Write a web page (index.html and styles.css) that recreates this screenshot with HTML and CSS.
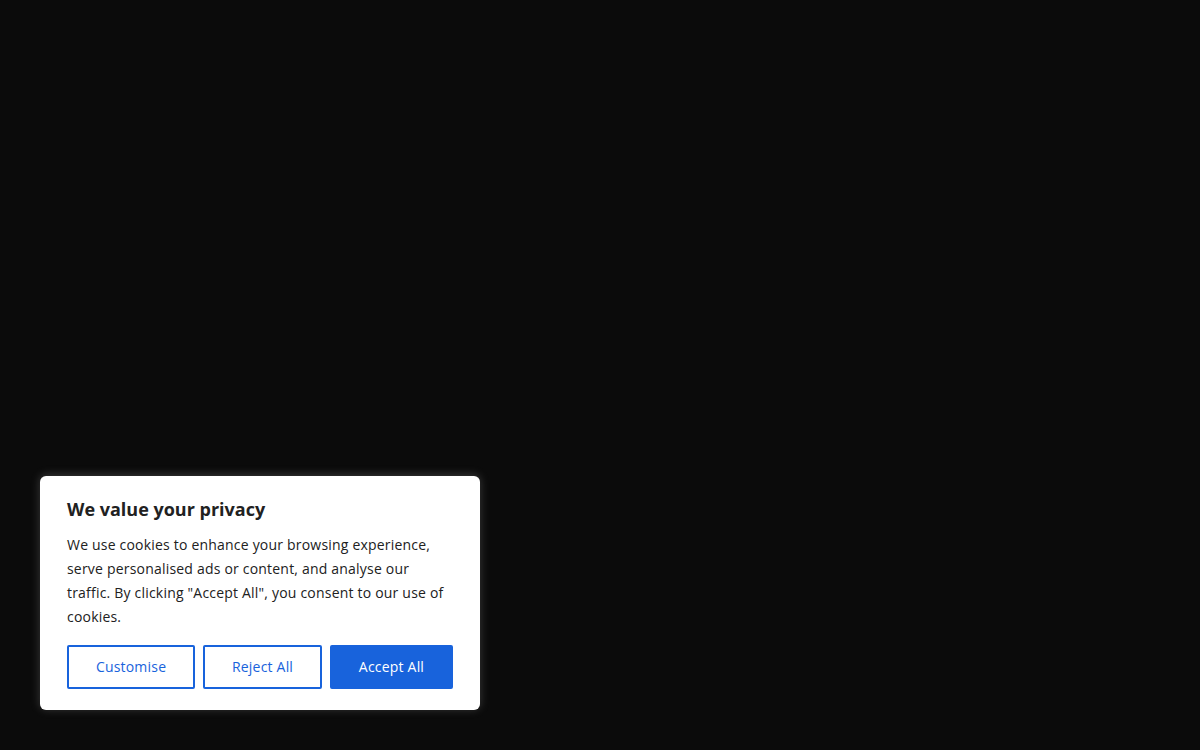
FILE: index.html
```html
<!DOCTYPE html>
<html lang="en">
<head>
<meta charset="utf-8">
<title>Cookie consent</title>
<link rel="stylesheet" href="styles.css">
</head>
<body>
<div class="page">
  <div class="consent">
    <p class="title">We value your privacy</p>
    <p class="desc">We use cookies to enhance your browsing experience, serve personalised ads or content, and analyse our traffic. By clicking "Accept All", you consent to our use of cookies.</p>
    <div class="actions">
      <button class="btn btn-outline">Customise</button>
      <button class="btn btn-outline">Reject All</button>
      <button class="btn btn-solid">Accept All</button>
    </div>
  </div>
</div>
</body>
</html>
```
FILE: styles.css
```css
* { box-sizing: border-box; }
html, body {
  margin: 0;
  padding: 0;
  background: #0b0b0b;
  font-family: "Open Sans", "Liberation Sans", sans-serif;
}
.page {
  width: 1200px;
  height: 750px;
  display: flex;
  align-items: flex-end;
  padding: 0 0 40px 40px;
}
.consent {
  width: 440px;
  background: #ffffff;
  border-radius: 6px;
  padding: 21px 27px 21px;
  box-shadow: 0 -1px 10px 0 rgba(172, 171, 171, 0.3);
}
.title {
  margin: 0 0 12px;
  font-size: 18px;
  font-weight: 700;
  line-height: 24px;
  color: #212121;
}
.desc {
  margin: 0;
  font-size: 14px;
  line-height: 24px;
  letter-spacing: 0.2px;
  color: #212121;
}
.actions {
  display: flex;
  gap: 8px;
  margin-top: 16px;
}
.btn {
  flex: 1 1 auto;
  font-family: inherit;
  font-size: 14px;
  line-height: 24px;
  letter-spacing: 0.2px;
  padding: 8px 10px;
  border: 2px solid #1863dc;
  border-radius: 2px;
  cursor: pointer;
  text-align: center;
}
.btn-outline {
  background: #ffffff;
  color: #1863dc;
}
.btn-solid {
  background: #1863dc;
  color: #ffffff;
}
```
